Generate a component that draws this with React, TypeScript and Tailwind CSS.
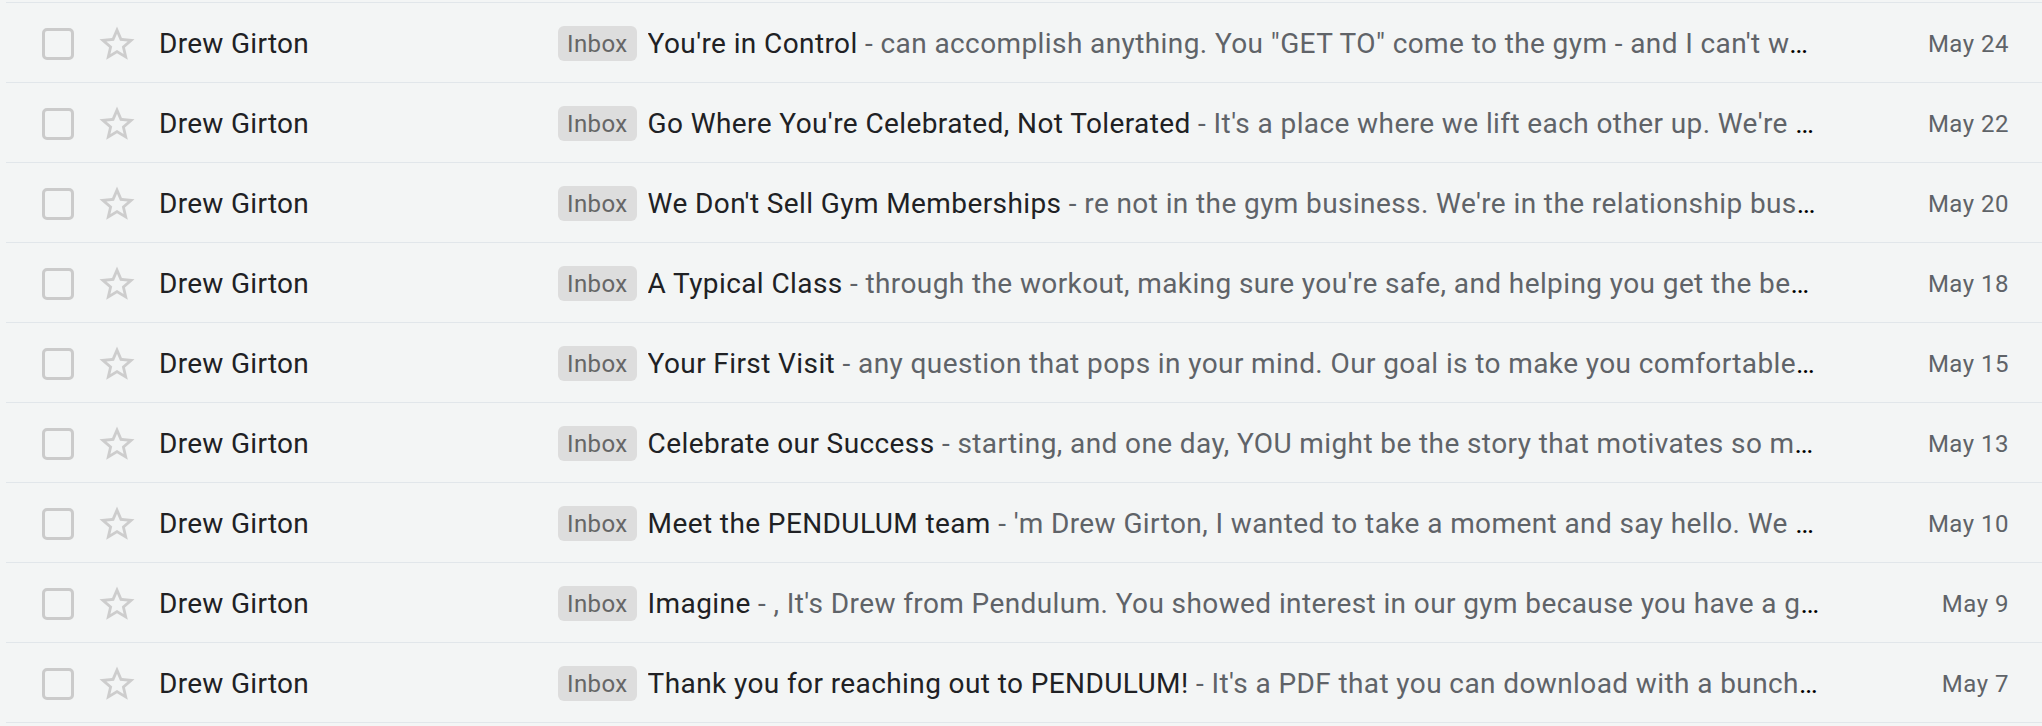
const emails = [
  {
    subject: "You're in Control",
    snippet:
      'can accomplish anything. You "GET TO" come to the gym - and I can\'t wait to see what you do next.',
    date: "May 24",
  },
  {
    subject: "Go Where You're Celebrated, Not Tolerated",
    snippet:
      "It's a place where we lift each other up. We're here for every rep and every win.",
    date: "May 22",
  },
  {
    subject: "We Don't Sell Gym Memberships",
    snippet:
      "re not in the gym business. We're in the relationship business, and that starts with you.",
    date: "May 20",
  },
  {
    subject: "A Typical Class",
    snippet:
      "through the workout, making sure you're safe, and helping you get the best out of every session.",
    date: "May 18",
  },
  {
    subject: "Your First Visit",
    snippet:
      "any question that pops in your mind. Our goal is to make you comfortable from the moment you arrive.",
    date: "May 15",
  },
  {
    subject: "Celebrate our Success",
    snippet:
      "starting, and one day, YOU might be the story that motivates so many others to begin.",
    date: "May 13",
  },
  {
    subject: "Meet the PENDULUM team",
    snippet:
      "'m Drew Girton, I wanted to take a moment and say hello. We are a small team of coaches.",
    date: "May 10",
  },
  {
    subject: "Imagine",
    snippet:
      ", It's Drew from Pendulum. You showed interest in our gym because you have a goal in mind.",
    date: "May 9",
  },
  {
    subject: "Thank you for reaching out to PENDULUM!",
    snippet:
      "It's a PDF that you can download with a bunch of tips to get you started.",
    date: "May 7",
  },
];

const StarIcon = () => (
  <svg viewBox="0 0 24 24" className="h-[42px] w-[42px] shrink-0" fill="#cdcdcd">
    <path d="M22 9.24l-7.19-.62L12 2 9.19 8.63 2 9.24l5.46 4.73L5.82 21 12 17.27 18.18 21l-1.63-7.03L22 9.24zM12 15.4l-3.76 2.27 1-4.28-3.32-2.88 4.38-.38L12 6.1l1.71 4.04 4.38.38-3.32 2.88 1 4.28L12 15.4z" />
  </svg>
);

const App = () => {
  return (
    <div
      className="min-h-screen w-full bg-[#f3f5f5] pt-[2px]"
      style={{ fontFamily: "Roboto, 'Liberation Sans', sans-serif" }}
    >
      <div className="ml-[6px] border-b border-[#e1e6ea]">
        {emails.map((email) => (
          <div
            key={email.date}
            className="flex h-[80px] items-center border-t border-[#e1e6ea] bg-[#f3f5f5] pt-[2px]"
          >
            <div className="ml-[36px] h-8 w-8 shrink-0 rounded-[5px] border-[3px] border-[#cbcbcb]" />
            <div className="ml-[22px]">
              <StarIcon />
            </div>
            <div className="ml-[21px] w-[399px] shrink-0 truncate text-[28px] tracking-[0.3px] text-[#202124]">
              Drew Girton
            </div>
            <span className="flex h-[35px] shrink-0 items-center rounded-[6px] bg-[#dddddd] px-[9px] text-[24px] tracking-[0.4px] text-[#666666]">
              Inbox
            </span>
            <div className="ml-[11px] min-w-0 flex-1 truncate text-[28px] tracking-[0.4px]">
              <span className="text-[#202124]">{email.subject}</span>
              <span className="text-[#5f6368]"> - {email.snippet}</span>
            </div>
            <div className="w-[222px] shrink-0 pr-[33px] text-right text-[24px] tracking-[0.5px] text-[#5f6368]">
              {email.date}
            </div>
          </div>
        ))}
      </div>
    </div>
  );
};

export default App;
